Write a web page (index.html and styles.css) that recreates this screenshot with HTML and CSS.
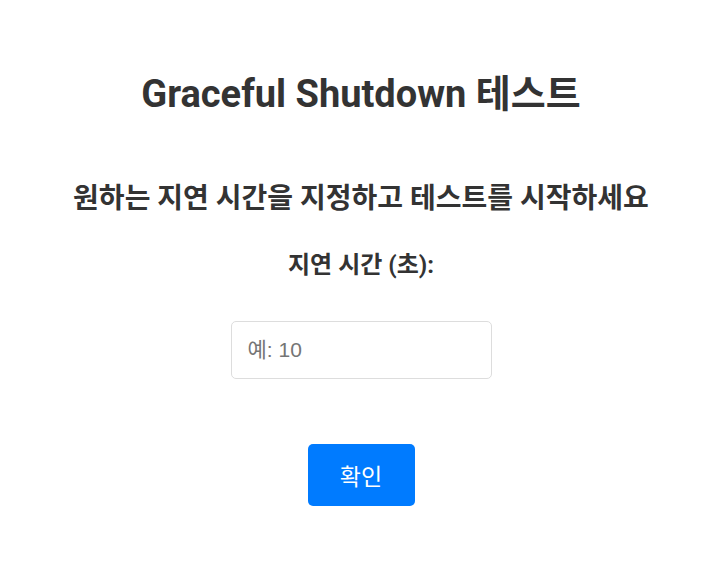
FILE: index.html
```html
<!DOCTYPE html>
<html lang="ko">
<head>
<meta charset="utf-8">
<title>Graceful Shutdown 테스트</title>
<link rel="stylesheet" href="styles.css">
</head>
<body>
<main class="page">
  <h1 class="title">Graceful Shutdown 테스트</h1>
  <h2 class="subtitle">원하는 지연 시간을 지정하고 테스트를 시작하세요</h2>
  <form class="form">
    <label class="label" for="delay">지연 시간 (초):</label>
    <input class="input" id="delay" type="number" placeholder="예: 10">
    <button class="button" type="button">확인</button>
  </form>
</main>
</body>
</html>
```
FILE: styles.css
```css
* { box-sizing: border-box; }
body {
  margin: 0;
  background: #fff;
  color: #333;
  font-family: Roboto, "Noto Sans CJK KR", sans-serif;
}
.page {
  display: flex;
  flex-direction: column;
  align-items: center;
  padding-top: 72px;
  padding-right: 4px;
}
.title {
  margin: 0;
  font-size: 38px;
  font-weight: 700;
  line-height: 44px;
}
.subtitle {
  margin: 66px 0 0;
  font-size: 28px;
  font-weight: 700;
  line-height: 34px;
}
.form {
  display: flex;
  flex-direction: column;
  align-items: center;
}
.label {
  margin-top: 34px;
  font-size: 24px;
  font-weight: 700;
  line-height: 30px;
}
.input {
  margin-top: 41px;
  width: 261px;
  height: 58px;
  border: 1px solid #ddd;
  border-radius: 5px;
  padding: 0 16px;
  font-family: "Liberation Sans", "Noto Sans CJK KR", sans-serif;
  font-size: 21px;
  color: #333;
}
.input::placeholder { color: #757575; }
.button {
  margin-top: 65px;
  width: 107px;
  height: 62px;
  border: none;
  border-radius: 5px;
  background: #007bff;
  color: #fff;
  font-family: "Liberation Sans", "Noto Sans CJK KR", sans-serif;
  font-size: 23px;
}
```
